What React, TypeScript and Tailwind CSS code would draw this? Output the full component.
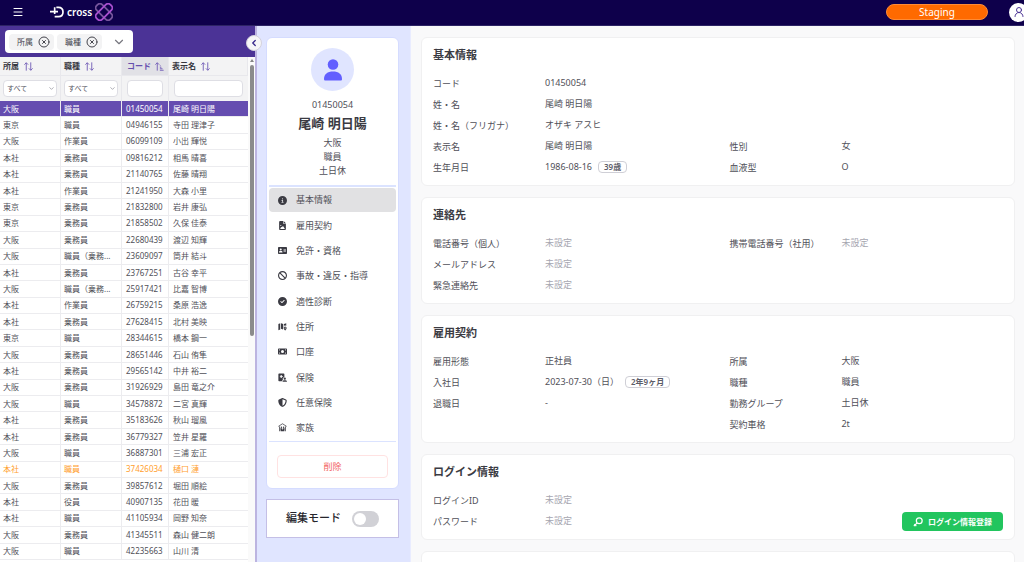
import React, { useState } from "react";
import {
  FaAddressCard,
  FaBan,
  FaCircleCheck,
  FaCircleInfo,
  FaFileImage,
  FaMoneyBill,
  FaShieldHalved,
} from "react-icons/fa6";
import {
  ChevronDown,
  ChevronLeft,
  CircleX,
  Menu,
  UserRound,
} from "lucide-react";

type Employee = [string, string, string, string];

const employees: Employee[] = [
  ["大阪", "職員", "01450054", "尾崎 明日陽"],
  ["東京", "職員", "04946155", "寺田 理津子"],
  ["大阪", "作業員", "06099109", "小出 輝悦"],
  ["本社", "乗務員", "09816212", "相馬 晴喜"],
  ["本社", "乗務員", "21140765", "佐藤 晴翔"],
  ["本社", "作業員", "21241950", "大森 小里"],
  ["東京", "乗務員", "21832800", "岩井 康弘"],
  ["東京", "乗務員", "21858502", "久保 佳泰"],
  ["大阪", "乗務員", "22680439", "渡辺 知輝"],
  ["大阪", "職員（乗務...", "23609097", "筒井 結斗"],
  ["本社", "乗務員", "23767251", "古谷 幸平"],
  ["大阪", "職員（乗務...", "25917421", "比嘉 智博"],
  ["本社", "作業員", "26759215", "桑原 浩逸"],
  ["本社", "乗務員", "27628415", "北村 美映"],
  ["東京", "職員", "28344615", "橋本 鋼一"],
  ["大阪", "乗務員", "28651446", "石山 侑隼"],
  ["本社", "乗務員", "29565142", "中井 裕二"],
  ["大阪", "乗務員", "31926929", "島田 竜之介"],
  ["大阪", "職員", "34578872", "二宮 真輝"],
  ["本社", "乗務員", "35183626", "秋山 瑠風"],
  ["本社", "乗務員", "36779327", "笠井 星羅"],
  ["大阪", "職員", "36887301", "三浦 宏正"],
  ["本社", "職員", "37426034", "樋口 漣"],
  ["大阪", "乗務員", "39857612", "堀田 順絵"],
  ["本社", "役員", "40907135", "花田 暖"],
  ["本社", "職員", "41105934", "岡野 知奈"],
  ["大阪", "乗務員", "41345511", "森山 健二朗"],
  ["大阪", "職員", "42235663", "山川 清"],
];

// 退職予定者はオレンジで表示する
const retiring = new Set(["37426034"]);

function Logo() {
  return (
    <a href="#" aria-label="D cross" className="flex items-center text-white">
      <svg viewBox="0 0 42 36" className="h-3 w-[14px]" fill="none">
        <path
          d="M0 17h24M14 4v20M19 4h6c9 0 14 5 14 14s-5 14-14 14h-11"
          stroke="currentColor"
          strokeWidth="5"
        />
      </svg>
      <span className="ml-[3px] text-[10px] leading-4 font-semibold">
        cross
      </span>
      <svg viewBox="0 0 50 50" className="ml-[3px] h-[18px] w-[18px]" fill="none">
        <g strokeWidth="5">
          <rect
            x="-2"
            y="14"
            width="54"
            height="22"
            rx="9"
            stroke="#76559c"
            transform="rotate(45 25 25)"
          />
          <rect
            x="-2"
            y="14"
            width="54"
            height="22"
            rx="9"
            stroke="#a94fcf"
            transform="rotate(-45 25 25)"
          />
        </g>
      </svg>
    </a>
  );
}

function MapPinIcon({ className }: { className?: string }) {
  return (
    <svg viewBox="0 0 24 24" className={className} fill="currentColor">
      <path d="M1 5l5-2v17l-5 2zM8 3l6 2v8l-1 7-5-2zM16 5l6-2v7a6 6 0 0 0-6 0z" />
      <path
        fillRule="evenodd"
        d="M19 12a4 4 0 0 1 4 4c0 3-4 7-4 7s-4-4-4-7a4 4 0 0 1 4-4zm0 2.500a1.500 1.500 0 1 0 0 3 1.500 1.500 0 0 0 0-3z"
      />
    </svg>
  );
}

function InsuranceIcon({ className }: { className?: string }) {
  return (
    <svg viewBox="0 0 24 24" className={className} fill="currentColor">
      <path
        fillRule="evenodd"
        d="M3 1h12a2 2 0 0 1 2 2v8a5 5 0 0 0-4 7l-3 4H3a2 2 0 0 1-2-2V3a2 2 0 0 1 2-2zm4 4v3H5v2h2v3h3v-3h3V8h-3V5z"
      />
      <circle cx="18" cy="15" r="3" />
      <path d="M12 23c0-3 3-4 6-4s6 1 6 4z" />
    </svg>
  );
}

function FamilyIcon({ className }: { className?: string }) {
  return (
    <svg viewBox="0 0 24 24" className={className} fill="currentColor">
      <path
        d="M1 9l11-7 11 7M4 9v13M20 9v13"
        fill="none"
        stroke="currentColor"
        strokeWidth="2"
      />
      <circle cx="9" cy="11" r="2" />
      <circle cx="15" cy="11" r="2" />
      <path d="M6 14h5v8H7zM13 14h5l-1 8h-4zM10 17h4v5h-4z" />
    </svg>
  );
}

function KeyIcon({ className }: { className?: string }) {
  return (
    <svg
      viewBox="0 0 24 24"
      className={className}
      fill="none"
      stroke="currentColor"
      strokeWidth="3"
    >
      <circle cx="15" cy="9" r="7" />
      <path d="M10 14l-8 8M3 17l5 5" />
    </svg>
  );
}

const menuItems = [
  { label: "基本情報", icon: FaCircleInfo },
  { label: "雇用契約", icon: FaFileImage },
  { label: "免許・資格", icon: FaAddressCard },
  { label: "事故・違反・指導", icon: FaBan },
  { label: "適性診断", icon: FaCircleCheck },
  { label: "住所", icon: MapPinIcon },
  { label: "口座", icon: FaMoneyBill },
  { label: "保険", icon: InsuranceIcon },
  { label: "任意保険", icon: FaShieldHalved },
  { label: "家族", icon: FamilyIcon },
];

function SortIcon({ sorted = false }: { sorted?: boolean }) {
  return (
    <svg
      viewBox="0 0 24 24"
      className="h-[9px] w-[9px] shrink-0"
      fill="none"
      stroke="#7460b8"
      strokeWidth="2.500"
    >
      <path d="M6 23V2M1 7l5-5 5 5" />
      {sorted ? (
        <path d="M13 10h2M13 14h4M13 18h7M13 22h10" />
      ) : (
        <path d="M18 1v21M13 17l5 5 5-5" />
      )}
    </svg>
  );
}

function FilterChip({ label }: { label: string }) {
  return (
    <span className="flex h-4 items-center gap-[5px] rounded-sm bg-[#f3f3f4] pr-1 pl-2 text-[8px] text-[#44444c]">
      {label}
      <button type="button" aria-label={`${label}を外す`}>
        <CircleX className="h-3 w-3" />
      </button>
    </span>
  );
}

function ColumnSelect({ label }: { label: string }) {
  return (
    <div className="relative">
      <select
        aria-label={label}
        className="h-[17px] w-full appearance-none rounded-sm border border-[#dedee4] bg-white px-[3px] text-[7px] leading-3 text-[#55555f]"
      >
        <option>すべて</option>
      </select>
      <ChevronDown className="pointer-events-none absolute top-[5px] right-[2px] h-[7px] w-[7px] text-[#777783]" />
    </div>
  );
}

function EmployeeTable({
  selected,
  onSelect,
}: {
  selected: string;
  onSelect: (code: string) => void;
}) {
  const columns = ["所属", "職種", "コード", "表示名"];

  return (
    <table className="h-[503px] w-full table-fixed border-separate border-spacing-0 text-left text-[8px] leading-3 text-[#505058]">
      <colgroup>
        <col className="w-[61px]" />
        <col className="w-[61px]" />
        <col className="w-[47px]" />
        <col />
      </colgroup>
      <thead className="bg-[#f3f3f4]">
        <tr className="h-[19px]">
          {columns.map((name) => (
            <th
              key={name}
              className={
                name === "コード"
                  ? "border-r border-b border-[#e8e8ec] bg-[#e1e1e6] p-0 font-semibold text-[#6650ae]"
                  : "border-r border-b border-[#e8e8ec] p-0 font-semibold text-[#36363e]"
              }
            >
              <span
                className={
                  name === "コード"
                    ? "flex items-center justify-between pr-1 pl-[5px]"
                    : "flex items-center gap-[5px] pl-[3px]"
                }
              >
                {name}
                <SortIcon sorted={name === "コード"} />
              </span>
            </th>
          ))}
        </tr>
        <tr className="h-[25px]">
          <td className="border-r border-[#e8e8ec] px-[3px]">
            <ColumnSelect label="所属" />
          </td>
          <td className="border-r border-[#e8e8ec] px-[3px]">
            <ColumnSelect label="職種" />
          </td>
          <td className="border-r border-[#e8e8ec] px-[5px]">
            <input
              aria-label="コード"
              className="block h-[17px] w-full rounded-sm border border-[#dedee4] bg-white px-1"
            />
          </td>
          <td className="px-[5px]">
            <input
              aria-label="表示名"
              className="block h-[17px] w-full rounded-sm border border-[#dedee4] bg-white px-1"
            />
          </td>
        </tr>
      </thead>
      <tbody>
        {employees.map((employee) => {
          const code = employee[2];
          let rowClass = "cursor-pointer";
          if (code === selected)
            rowClass = "cursor-pointer bg-[#654db0] text-white";
          else if (retiring.has(code))
            rowClass = "cursor-pointer text-[#ffa02e]";

          return (
            <tr key={code} className={rowClass} onClick={() => onSelect(code)}>
              {employee.map((value, index) => (
                <td
                  key={index}
                  className={
                    index < 2
                      ? "border-r border-b border-[#ececef] py-0 pr-0 pl-[3px] whitespace-nowrap"
                      : "border-r border-b border-[#ececef] py-0 pr-0 pl-1 whitespace-nowrap last:border-r-0"
                  }
                >
                  {value}
                </td>
              ))}
            </tr>
          );
        })}
      </tbody>
    </table>
  );
}

function ProfilePanel() {
  const [active, setActive] = useState("基本情報");

  return (
    <aside className="w-[154px] shrink-0 border-r border-[#e9ecff] bg-[#e0e5ff] pt-[11px] pr-[11px] pl-[9px]">
      <div className="rounded-md border border-[#d5dcff] bg-white px-[2px] pt-[10px] pb-[10px] text-[9px] text-[#505058]">
        <div className="flex flex-col items-center">
          <span className="flex h-[43px] w-[43px] items-center justify-center rounded-full bg-[#e0e5ff]">
            <svg viewBox="0 0 18 22" className="h-[22px] w-[18px]" fill="#625fff">
              <circle cx="9" cy="5.500" r="5.300" />
              <path d="M0 20c0-5 3.500-7.500 9-7.500s9 2.500 9 7.500c0 1-.5 1.500-1.500 1.500h-15C.5 21.500 0 21 0 20z" />
            </svg>
          </span>
          <span className="mt-2 leading-3">01450054</span>
          <h1 className="mt-1 text-[13px] leading-4 font-bold text-[#3b3b43]">
            尾崎 明日陽
          </h1>
          <div className="mt-[5px] text-center leading-[14px]">
            <p>大阪</p>
            <p>職員</p>
            <p>土日休</p>
          </div>
        </div>
        <nav className="mt-[7px] grid h-[257px] content-between border-t-2 border-b border-[#dbe3ff] py-px">
          {menuItems.map(({ label, icon: Icon }) => (
            <button
              key={label}
              type="button"
              onClick={() => setActive(label)}
              className={
                active === label
                  ? "flex h-6 w-full items-center gap-[9px] rounded-sm bg-[#e1e1e3] pl-[9px]"
                  : "flex h-6 w-full items-center gap-[9px] rounded-sm pl-[9px]"
              }
            >
              <Icon className="h-[9px] w-[9px] text-[#3b3b43]" />
              {label}
            </button>
          ))}
        </nav>
        <div className="px-2 pt-[13px]">
          <button
            type="button"
            className="h-[23px] w-full rounded-sm border border-[#ffe2e2] text-[#f26464]"
          >
            削除
          </button>
        </div>
      </div>
      <label className="mt-[10px] flex h-[39px] items-center justify-center gap-[11px] border border-[#c4bfe6] bg-white text-[11px] font-medium text-[#26262c]">
        編集モード
        <input
          type="checkbox"
          role="switch"
          className="h-4 w-[27px] appearance-none rounded-full bg-[#d1d1d6] p-[2px] before:block before:h-3 before:w-3 before:rounded-full before:bg-white checked:bg-[#654db0] checked:before:ml-[11px]"
        />
      </label>
    </aside>
  );
}

function Badge({ children }: { children: React.ReactNode }) {
  return (
    <span className="rounded-sm border border-[#cfcfd6] px-[5px] text-[8px] leading-[10px] font-semibold text-[#5c5c68]">
      {children}
    </span>
  );
}

const unset = <span className="text-[#a6a6b0]">未設定</span>;

type Field = { label: string; value: React.ReactNode };

function InfoCard({
  title,
  rows,
  action,
}: {
  title?: string;
  rows: [Field | null, Field | null][];
  action?: React.ReactNode;
}) {
  return (
    <section className="relative rounded-md border border-[#f0f0f1] bg-white px-[11px] pt-[9px] pb-2">
      {title && (
        <h2 className="text-[11px] leading-4 font-semibold text-[#3b3b43]">
          {title}
        </h2>
      )}
      <dl className="mt-[9px] text-[9px] text-[#505058]">
        {rows.map((row, i) => (
          <div key={i} className="flex h-[21px]">
            {row.map((field, j) => (
              <div key={j} className="flex flex-1 first:flex-[0_0_52%]">
                {field && (
                  <>
                    <dt className="w-28 shrink-0 pt-[2px] leading-5">
                      {field.label}
                    </dt>
                    <dd className="flex h-[21px] items-center gap-[6px] pt-px">
                      {field.value}
                    </dd>
                  </>
                )}
              </div>
            ))}
          </div>
        ))}
      </dl>
      {action && <div className="absolute right-[11px] bottom-2">{action}</div>}
    </section>
  );
}

export default function App() {
  const [selected, setSelected] = useState("01450054");

  return (
    <div className="flex h-screen flex-col overflow-hidden bg-[#f9f9fa] font-['Noto_Sans','Noto_Sans_CJK_JP',sans-serif]">
      <header className="flex h-[26px] shrink-0 items-center overflow-hidden border-b border-[#2d2465] bg-[#0e004b] pb-px">
        <button type="button" aria-label="メニュー" className="ml-3 text-white">
          <Menu className="h-3 w-3" />
        </button>
        <div className="ml-[26px]">
          <Logo />
        </div>
        <button
          type="button"
          className="ml-auto h-4 w-[102px] rounded-full border border-[#ff8b35] bg-[#ff6a00] text-[10px] leading-3 text-white"
        >
          Staging
        </button>
        <button
          type="button"
          aria-label="アカウント"
          className="-mr-1 ml-[21px] flex h-[19px] w-[19px] shrink-0 items-center justify-center rounded-full bg-white text-[#4b3396]"
        >
          <UserRound className="h-3 w-3" />
        </button>
      </header>

      <div className="flex min-h-0 flex-1">
        <div className="relative flex w-[257px] shrink-0 flex-col border-r-2 border-[#bcb4e0] bg-white">
          <div className="h-[31px] shrink-0 bg-[#4b3396] px-[5px] pt-1">
            <div className="flex h-[23px] w-32 items-center gap-[3px] rounded-sm bg-white pl-1">
              <FilterChip label="所属" />
              <FilterChip label="職種" />
              <button type="button" aria-label="項目を選択" className="ml-auto pr-[7px]">
                <ChevronDown className="h-[14px] w-[14px] text-[#77777f]" />
              </button>
            </div>
          </div>
          <div className="flex min-h-0 flex-1">
            <div className="min-w-0 flex-1 overflow-hidden">
              <EmployeeTable selected={selected} onSelect={setSelected} />
            </div>
            <div className="flex w-[7px] flex-col items-center bg-[#fafafa]">
              <span className="mt-[2px] h-0 w-0 border-x-2 border-b-3 border-x-transparent border-b-[#858585]" />
              <span className="mt-[3px] h-[271px] w-1 rounded-full bg-[#8b8b8b]" />
            </div>
          </div>
          <button
            type="button"
            aria-label="一覧を閉じる"
            className="absolute top-[9px] -right-[7px] z-10 flex h-4 w-4 items-center justify-center rounded-full border border-[#d4d2dc] bg-[#f6f6f8] text-[#35258a]"
          >
            <ChevronLeft className="h-[10px] w-[10px]" strokeWidth={3} />
          </button>
        </div>

        <ProfilePanel />

        <main className="flex min-w-0 flex-1 flex-col gap-[11px] overflow-hidden pt-[11px] pr-[9px] pl-[10px] *:shrink-0">
          <InfoCard
            title="基本情報"
            rows={[
              [{ label: "コード", value: "01450054" }, null],
              [{ label: "姓・名", value: "尾崎 明日陽" }, null],
              [{ label: "姓・名（フリガナ）", value: "オザキ アスヒ" }, null],
              [
                { label: "表示名", value: "尾崎 明日陽" },
                { label: "性別", value: "女" },
              ],
              [
                {
                  label: "生年月日",
                  value: (
                    <>
                      1986-08-16 <Badge>39歳</Badge>
                    </>
                  ),
                },
                { label: "血液型", value: "O" },
              ],
            ]}
          />
          <InfoCard
            title="連絡先"
            rows={[
              [
                { label: "電話番号（個人）", value: unset },
                { label: "携帯電話番号（社用）", value: unset },
              ],
              [{ label: "メールアドレス", value: unset }, null],
              [{ label: "緊急連絡先", value: unset }, null],
            ]}
          />
          <InfoCard
            title="雇用契約"
            rows={[
              [
                { label: "雇用形態", value: "正社員" },
                { label: "所属", value: "大阪" },
              ],
              [
                {
                  label: "入社日",
                  value: (
                    <>
                      2023-07-30（日） <Badge>2年9ヶ月</Badge>
                    </>
                  ),
                },
                { label: "職種", value: "職員" },
              ],
              [
                { label: "退職日", value: "-" },
                { label: "勤務グループ", value: "土日休" },
              ],
              [null, { label: "契約車格", value: "2t" }],
            ]}
          />
          <InfoCard
            title="ログイン情報"
            rows={[
              [{ label: "ログインID", value: unset }, null],
              [{ label: "パスワード", value: unset }, null],
            ]}
            action={
              <button
                type="button"
                className="flex h-[19px] items-center gap-[5px] rounded-sm bg-[#22c55e] px-[11px] text-[8px] font-semibold text-white"
              >
                <KeyIcon className="h-[10px] w-[10px]" />
                ログイン情報登録
              </button>
            }
          />
          <InfoCard rows={[]} />
        </main>
      </div>
    </div>
  );
}
